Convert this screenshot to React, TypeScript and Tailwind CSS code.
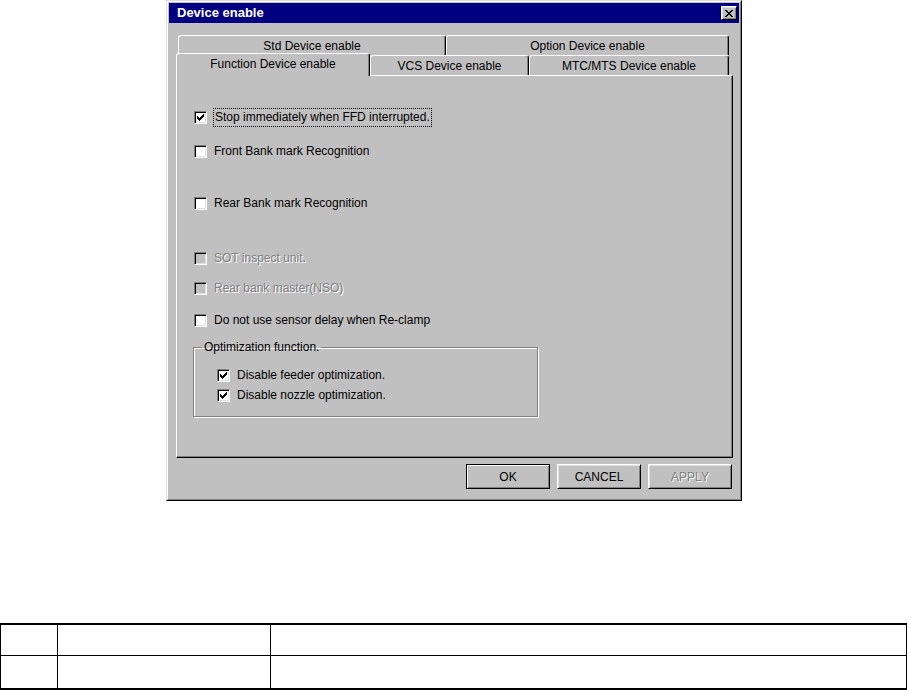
import React from "react";

const font = "font-['Liberation_Sans',Arial,sans-serif]";

function Check() {
  // classic 7x7 check mark, one 3px column per step
  return (
    <svg width="7" height="7" viewBox="0 0 7 7" shapeRendering="crispEdges">
      <path
        d="M0 2h1v3H0zM1 3h1v3H1zM2 4h1v3H2zM3 3h1v3H3zM4 2h1v3H4zM5 1h1v3H5zM6 0h1v3H6z"
        fill="#000"
      />
    </svg>
  );
}

function CheckBox({ checked, disabled }: { checked?: boolean; disabled?: boolean }) {
  return (
    <span
      className={[
        "flex h-[13px] w-[13px] shrink-0 items-center justify-center border border-t-[#808080] border-l-[#808080] border-b-white border-r-white shadow-[inset_1px_1px_0_#000,inset_-1px_-1px_0_#dfdfdf]",
        disabled ? "bg-[#c0c0c0]" : "bg-white",
      ].join(" ")}
    >
      {checked && <Check />}
    </span>
  );
}

function Item({
  label,
  checked,
  disabled,
  focused,
}: {
  label: string;
  checked?: boolean;
  disabled?: boolean;
  focused?: boolean;
}) {
  return (
    <div className="flex h-[20px] items-center">
      <CheckBox checked={checked} disabled={disabled} />
      {focused ? (
        <span className="ml-[6px] border border-dotted border-black px-[1px] leading-[17px]">
          {label}
        </span>
      ) : (
        <span
          className={[
            "ml-[7px]",
            disabled ? "text-[#808080] [text-shadow:1px_1px_0_#fff]" : "",
          ].join(" ")}
        >
          {label}
        </span>
      )}
    </div>
  );
}

function Button({
  children,
  primary,
  disabled,
}: {
  children: React.ReactNode;
  primary?: boolean;
  disabled?: boolean;
}) {
  return (
    <div
      className={[
        "flex h-[25px] w-[84px] items-center justify-center bg-[#c0c0c0]",
        primary
          ? "border border-black shadow-[inset_1px_1px_0_#fff,inset_-1px_-1px_0_#808080]"
          : "border border-t-white border-l-white border-b-black border-r-black shadow-[inset_1px_1px_0_#dfdfdf,inset_-1px_-1px_0_#808080]",
        disabled ? "text-[#808080] [text-shadow:1px_1px_0_#fff]" : "text-black",
      ].join(" ")}
    >
      {children}
    </div>
  );
}

function Tab({ label, width, className = "" }: { label: string; width: string; className?: string }) {
  return (
    <div
      className={`${width} ${className} flex items-center justify-center rounded-t-[3px] border-l border-t border-r border-l-white border-t-white border-r-black bg-[#c0c0c0] shadow-[inset_-1px_0_0_#808080]`}
    >
      {label}
    </div>
  );
}

export default function App() {
  return (
    <div className={`h-[690px] w-[909px] bg-white text-[12px] text-black ${font}`}>
      {/* dialog */}
      <div className="ml-[166px] h-[501px] w-[576px] border border-t-[#dfdfdf] border-l-[#dfdfdf] border-r-black border-b-black bg-[#c0c0c0]">
        <div className="h-full border border-t-white border-l-white border-r-[#808080] border-b-[#808080] p-[1px]">
          {/* title bar */}
          <div className="flex h-[20px] items-center justify-between bg-[#000080] pl-[8px] pr-[2px]">
            <span className="text-[13px] font-bold text-white">Device enable</span>
            <div className="flex h-[14px] w-[16px] items-center justify-center border border-t-white border-l-white border-b-black border-r-black bg-[#c0c0c0] shadow-[inset_1px_1px_0_#dfdfdf,inset_-1px_-1px_0_#808080]">
              <svg width="8" height="7" viewBox="0 0 8 7" shapeRendering="crispEdges">
                <path
                  d="M0 0h2v1H0zM6 0h2v1H6zM1 1h2v1H1zM5 1h2v1H5zM2 2h4v1H2zM3 3h2v1H3zM2 4h4v1H2zM1 5h2v1H1zM5 5h2v1H5zM0 6h2v1H0zM6 6h2v1H6z"
                  fill="#000"
                />
              </svg>
            </div>
          </div>

          <div className="ml-[7px] mt-[12px] w-[557px]">
            {/* back row of tabs */}
            <div className="flex h-[20px] pl-[2px]">
              <Tab label="Std Device enable" width="w-[268px]" />
              <Tab label="Option Device enable" width="w-[283px]" />
            </div>
            {/* front row of tabs */}
            <div className="flex h-[20px] items-start">
              <Tab
                label="Function Device enable"
                width="w-[194px]"
                className="relative z-10 -mt-[2px] h-[23px] pb-[2px]"
              />
              <Tab label="VCS Device enable" width="w-[159px] h-[20px]" />
              <Tab label="MTC/MTS Device enable" width="w-[200px] h-[20px]" />
            </div>

            {/* panel */}
            <div className="h-[383px] border border-t-white border-l-white border-r-black border-b-black pl-[17px] pt-[31px] shadow-[inset_-1px_-1px_0_#808080]">
              <Item label="Stop immediately when FFD interrupted." checked focused />
              <div className="mt-[14px]">
                <Item label="Front Bank mark Recognition" />
              </div>
              <div className="mt-[32px]">
                <Item label="Rear Bank mark Recognition" />
              </div>
              <div className="mt-[35px]">
                <Item label="SOT inspect unit." disabled />
              </div>
              <div className="mt-[10px]">
                <Item label="Rear bank master(NSO)" disabled />
              </div>
              <div className="mt-[12px]">
                <Item label="Do not use sensor delay when Re-clamp" />
              </div>

              <fieldset className="-ml-[1px] mt-[10px] w-[345px] border border-[#808080] pb-[11px] shadow-[inset_1px_1px_0_#fff,1px_1px_0_#fff]">
                <legend className="ml-[8px] px-[2px] leading-[14px]">Optimization function.</legend>
                <div className="mt-[11px] pl-[23px]">
                  <Item label="Disable feeder optimization." checked />
                  <Item label="Disable nozzle optimization." checked />
                </div>
              </fieldset>
            </div>

            {/* buttons */}
            <div className="mt-[6px] flex justify-end gap-[7px] pr-[1px]">
              <Button primary>OK</Button>
              <Button>CANCEL</Button>
              <Button disabled>APPLY</Button>
            </div>
          </div>
        </div>
      </div>

      {/* table under the screenshot */}
      <div className="mt-[122px] w-[907px] border-x border-y-2 border-black">
        <div className="flex h-[31px] border-b border-black">
          <div className="w-[57px] border-r border-black" />
          <div className="w-[213px] border-r border-black" />
          <div className="flex-1" />
        </div>
        <div className="flex h-[32px]">
          <div className="w-[57px] border-r border-black" />
          <div className="w-[213px] border-r border-black" />
          <div className="flex-1" />
        </div>
      </div>
    </div>
  );
}
